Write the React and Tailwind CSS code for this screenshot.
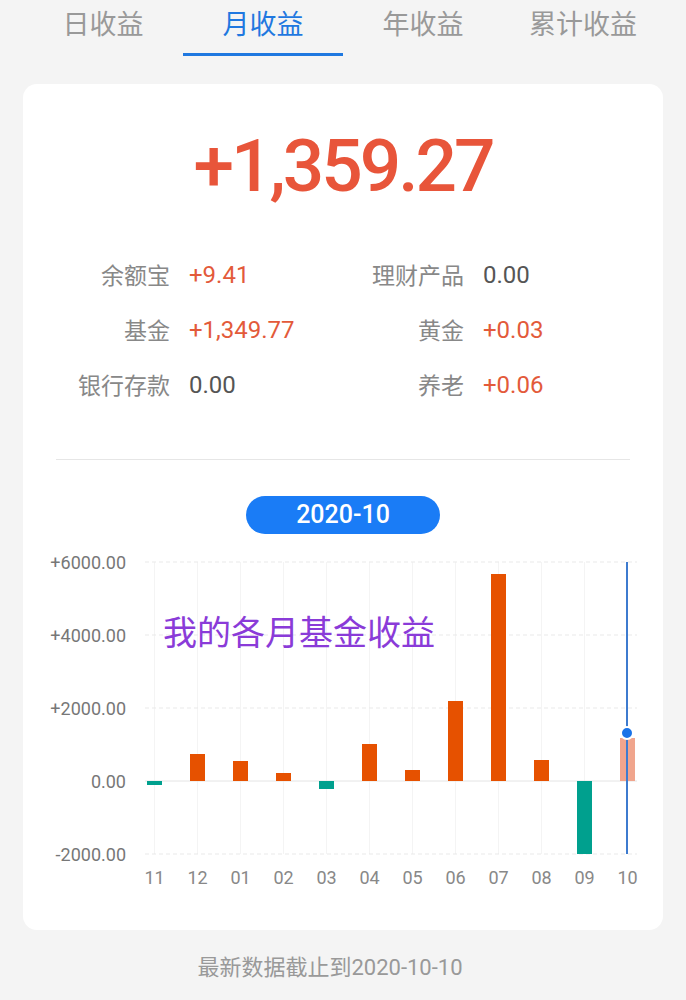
import React from 'react'

const cjk = "font-['Noto_Sans_CJK_SC','Noto_Sans',sans-serif]"
const rob = "font-['Roboto','Noto_Sans_CJK_SC',sans-serif]"

const tabs = ['日收益', '月收益', '年收益', '累计收益']

const stats = [
  ['余额宝', '+9.41', true, '理财产品', '0.00', false],
  ['基金', '+1,349.77', true, '黄金', '+0.03', true],
  ['银行存款', '0.00', false, '养老', '+0.06', true],
]

// bar heights in px above / below the zero line (73px = 2000)
const bars = [
  { m: '11', h: -4 },
  { m: '12', h: 27 },
  { m: '01', h: 20 },
  { m: '02', h: 8 },
  { m: '03', h: -8 },
  { m: '04', h: 37 },
  { m: '05', h: 11 },
  { m: '06', h: 80 },
  { m: '07', h: 207 },
  { m: '08', h: 21 },
  { m: '09', h: -73 },
  { m: '10', h: 43, active: true },
]

const yTicks = [
  ['+6000.00', 562],
  ['+4000.00', 635],
  ['+2000.00', 708],
  ['0.00', 781],
  ['-2000.00', 854],
]

function Chart() {
  const zero = 781
  return (
    <svg width="640" height="350" viewBox="23 545 640 350" className="block">
      {bars.map((b, i) => {
        const cx = 154.5 + i * 43
        return <line key={'v' + i} x1={cx} x2={cx} y1={562} y2={854} stroke="#f4f4f4" strokeWidth="1" />
      })}
      {yTicks.map(([t, y]) => (
        <g key={t}>
          <line
            x1={145}
            x2={637}
            y1={y}
            y2={y}
            stroke={y === zero ? '#e4e4e4' : '#e9e9e9'}
            strokeWidth="1"
            strokeDasharray={y === zero ? undefined : '4 3'}
          />
          <text x={126} y={y + 6.5} textAnchor="end" fontSize="18" fill="#777" className={rob}>
            {t}
          </text>
        </g>
      ))}
      <text x={163} y={645} fontSize="34" fill="#8a3bd8" className={cjk}>
        我的各月基金收益
      </text>
      {bars.map((b, i) => {
        const cx = 154.5 + i * 43
        const y = b.h >= 0 ? zero - b.h : zero
        const fill = b.active ? '#f0a58d' : b.h >= 0 ? '#e65100' : '#00a08e'
        return (
          <g key={b.m}>
            <rect x={cx - 7.5} y={y} width={15} height={Math.abs(b.h)} fill={fill} />
            <text x={cx} y={884} textAnchor="middle" fontSize="18" fill="#888" className={rob}>
              {b.m}
            </text>
          </g>
        )
      })}
      <line x1={627} x2={627} y1={562} y2={854} stroke="#3d7bcf" strokeWidth="2" />
      <circle cx={627} cy={733} r={6} fill="#1a73e8" stroke="#fff" strokeWidth="2" />
    </svg>
  )
}

function Stat({ label, value, up }) {
  return (
    <>
      <div className={`flex h-[55px] items-center justify-end text-[23px] text-[#888] ${cjk}`}>{label}</div>
      <div className={`flex h-[55px] items-center text-[24px] ${rob} ${up ? 'text-[#e35a3a]' : 'text-[#555]'}`}>
        {value}
      </div>
    </>
  )
}

export default function App() {
  return (
    <div className="min-h-screen w-[686px] bg-[#f4f4f4] px-[23px]">
      <div className="grid grid-cols-4">
        {tabs.map((t, i) => (
          <div key={t} className="flex h-[56px] flex-col items-center">
            <span className={`pt-[6px] text-[27px] leading-[34px] ${cjk} ${i === 1 ? 'text-[#1f78e0]' : 'text-[#999]'}`}>
              {t}
            </span>
            {i === 1 && <div className="mt-auto h-[3px] w-full bg-[#1f78e0]" />}
          </div>
        ))}
      </div>

      <div className="mt-[28px] h-[846px] rounded-[14px] bg-white">
        <div
          className={`pt-[46px] text-center text-[73px] font-medium leading-[73px] tracking-[-3px] text-[#e8553a] ${rob}`}
        >
          +1,359.27
        </div>

        <div className="mt-[44px] grid grid-cols-[147px_128px_128px_1fr] gap-x-[19px]">
          {stats.map((r) => (
            <React.Fragment key={r[0]}>
              <Stat label={r[0]} value={r[1]} up={r[2]} />
              <Stat label={r[3]} value={r[4]} up={r[5]} />
            </React.Fragment>
          ))}
        </div>

        <div className="mx-[33px] mt-[47px] h-px bg-[#e6e6e6]" />

        <div className="mt-[36px] flex justify-center">
          <div
            className={`flex h-[38px] w-[194px] items-center justify-center rounded-full bg-[#1a7cf6] text-[25px] font-medium text-white ${rob}`}
          >
            2020-10
          </div>
        </div>

        <div className="mt-[11px]">
          <Chart />
        </div>
      </div>

      <div className={`mt-[24px] pr-[26px] text-center text-[22px] leading-[28px] text-[#999] ${rob}`}>
        最新数据截止到2020-10-10
      </div>
    </div>
  )
}
